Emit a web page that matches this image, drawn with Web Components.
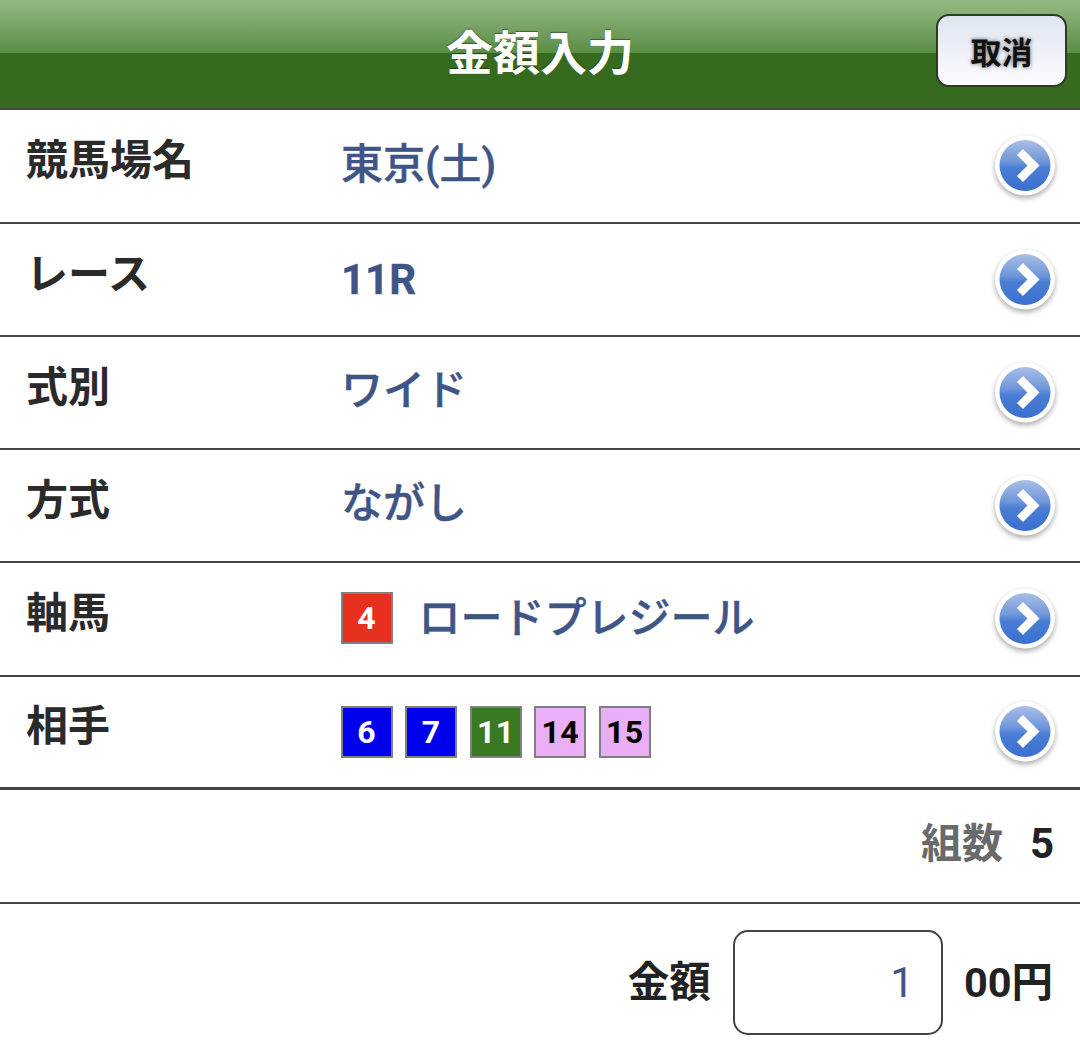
<!DOCTYPE html>
<html lang="ja"><head><meta charset="utf-8">
<style>
html,body{margin:0;padding:0;background:#fff}
body{font-family:Roboto,"Noto Sans CJK JP",sans-serif;width:1080px;height:1055px;overflow:hidden}
</style></head><body>
<app-header title-text="金額入力" action="取消"></app-header>
<info-row label="競馬場名" style="--h:112px" lift>東京(土)</info-row>
<info-row label="レース"><b style="font-weight:700">11R</b></info-row>
<info-row label="式別" lift>ワイド</info-row>
<info-row label="方式" lift>ながし</info-row>
<info-row label="軸馬" style="--h:112px"><num-badge c="red" style="margin-bottom:2px">4</num-badge><span style="margin-left:26px">ロードプレジール</span></info-row>
<info-row label="相手" last><num-badge c="blue">6</num-badge><num-badge c="blue" class="g">7</num-badge><num-badge c="green" class="g">11</num-badge><num-badge c="pink" class="g">14</num-badge><num-badge c="pink" class="g">15</num-badge></info-row>
<count-row label="組数" value="5"></count-row>
<amount-row></amount-row>
<script>
function def(name, html, init){
  customElements.define(name, class extends HTMLElement{
    constructor(){super();this.attachShadow({mode:'open'}).innerHTML=html;}
    connectedCallback(){init&&init.call(this,this.shadowRoot);}
  });
}
def('app-header',`<style>
:host{display:flex;align-items:center;justify-content:center;position:relative;height:108px;border-bottom:2px solid #444;
background:linear-gradient(#95ba84 0,#5a8e46 52.5px,#366b1f 53px,#366b1f 100%)}
h1{margin:0;font-size:47px;font-weight:700;color:#fff;text-shadow:0 -1px 1px rgba(0,0,0,.4);line-height:1;position:relative;top:-1px}
button{position:absolute;right:13px;top:14px;width:131px;height:73px;box-sizing:border-box;border:2px solid #2d3a28;border-radius:13px;
background:linear-gradient(#dfe5f0,#fbfcfe);font:700 31px Roboto,"Noto Sans CJK JP",sans-serif;color:#111;padding:0;text-shadow:0 0 4px rgba(0,0,0,.55)}
</style><h1></h1><button></button>`,function(s){s.querySelector('h1').textContent=this.getAttribute('title-text');s.querySelector('button').textContent=this.getAttribute('action');});
def('info-row',`<style>
:host{display:flex;align-items:center;height:var(--h,111px);border-bottom:2px solid #444;padding:0 23px 0 26px}
:host([last]){border-bottom-width:3px;height:110px}
.l{width:315px;flex:none;font-size:42px;font-weight:700;color:#2a2a2a;line-height:1;position:relative;top:-5px}
.v{flex:1;display:flex;align-items:center;font-size:42px;font-weight:500;color:#3f5585;line-height:1;-webkit-text-stroke:.4px #3f5585}
:host([lift]) .v{padding-bottom:3px}
svg{display:block;flex:none;width:64px;height:66px;overflow:visible}
</style><div class="l"></div><div class="v"><slot></slot></div>
<svg viewBox="0 0 64 66"><defs>
<linearGradient id="b" x1="0" y1="0" x2="0" y2="1"><stop offset="0" stop-color="#a9bfe6"/><stop offset=".42" stop-color="#7097da"/><stop offset=".55" stop-color="#4a7dd4"/><stop offset="1" stop-color="#3a6fd0"/></linearGradient>
<filter id="f" x="-25%" y="-25%" width="150%" height="150%"><feGaussianBlur stdDeviation="2.4"/></filter></defs>
<circle cx="32" cy="35" r="30.5" fill="#000" opacity=".3" filter="url(#f)"/>
<circle cx="32" cy="32.5" r="30" fill="#fff"/><circle cx="32" cy="32.5" r="25.5" fill="url(#b)"/>
<path d="M27 19 L40.5 32.5 L27 46" fill="none" stroke="#fff" stroke-width="8.5"/></svg>`,function(s){s.querySelector('.l').textContent=this.getAttribute('label');});
def('num-badge',`<style>
:host{display:inline-flex;align-items:center;justify-content:center;width:51.6px;height:51.6px;box-sizing:border-box;border:2px solid #7f7f7f;font-size:32px;font-weight:700;line-height:1;flex:none;letter-spacing:.5px;-webkit-text-stroke:0}
:host(.g){margin-left:12.9px}
:host([c=red]){background:#e8301f;color:#fff}
:host([c=blue]){background:#0000ee;color:#fff}
:host([c=green]){background:#377a22;color:#fff}
:host([c=pink]){background:#e9aef5;color:#000}
</style><slot></slot>`);
def('count-row',`<style>
:host{display:flex;align-items:center;justify-content:flex-end;height:112px;box-sizing:border-box;height:114px;border-bottom:2px solid #444;padding:0 26px 4px 0;line-height:1}
.l{font-size:41px;font-weight:700;color:#6a6a6a}
.v{font-size:42px;font-weight:700;color:#222;margin-left:27px}
</style><span class="l"></span><span class="v"></span>`,function(s){s.querySelector('.l').textContent=this.getAttribute('label');s.querySelector('.v').textContent=this.getAttribute('value');});
def('amount-row',`<style>
:host{display:flex;align-items:center;justify-content:flex-end;height:151px;padding:6px 27px 0 0;line-height:1;font-size:41.5px;font-weight:700;color:#222;box-sizing:border-box}
.i{width:210px;height:105px;box-sizing:border-box;border:2px solid #444;border-radius:15px;margin:0 21px 0 22px;display:flex;align-items:center;justify-content:flex-end;padding-right:27px;font-weight:400;color:#3f5585;font-size:42px}
</style><span>金額</span><div class="i">1</div><span>00円</span>`);
</script>
</body></html>
